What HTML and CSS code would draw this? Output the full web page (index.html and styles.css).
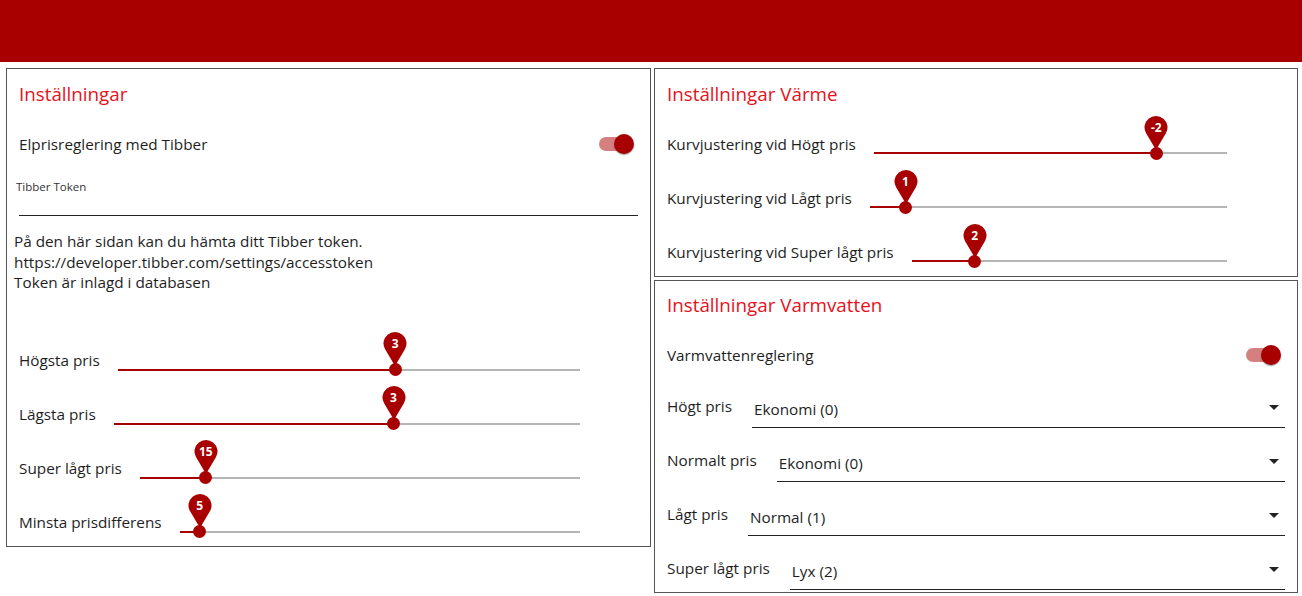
FILE: index.html
```html
<!DOCTYPE html>
<html lang="sv">
<head>
<meta charset="utf-8">
<title>Inställningar</title>
<link rel="stylesheet" href="styles.css">
</head>
<body>
<header class="topbar"></header>
<main class="layout">
  <section class="panel panel-main">
    <h2 class="panel-title">Inställningar</h2>
    <div class="switch-row">
      <span class="row-label">Elprisreglering med Tibber</span>
      <span class="switch"><span class="switch-track"></span><span class="switch-thumb"></span></span>
    </div>
    <div class="text-field">
      <label class="field-label">Tibber Token</label>
      <div class="field-input"></div>
    </div>
    <p class="info">På den här sidan kan du hämta ditt Tibber token.<br>https://developer.tibber.com/settings/accesstoken<br>Token är inlagd i databasen</p>
    <div class="slider-list slider-list-main">
      <div class="slider-row">
        <span class="row-label">Högsta pris</span>
        <div class="slider">
          <div class="slider-rail"></div>
          <div class="slider-track" style="width:60%"></div>
          <div class="slider-thumb" style="left:60%">
            <span class="pin"><svg class="pin-shape" viewBox="0 0 24 34"><path d="M12 34 L2.11 17.37 A11.5 11.5 0 1 1 21.89 17.37 Z"/></svg><span class="pin-text">3</span></span>
          </div>
        </div>
      </div>
      <div class="slider-row">
        <span class="row-label">Lägsta pris</span>
        <div class="slider">
          <div class="slider-rail"></div>
          <div class="slider-track" style="width:60%"></div>
          <div class="slider-thumb" style="left:60%">
            <span class="pin"><svg class="pin-shape" viewBox="0 0 24 34"><path d="M12 34 L2.11 17.37 A11.5 11.5 0 1 1 21.89 17.37 Z"/></svg><span class="pin-text">3</span></span>
          </div>
        </div>
      </div>
      <div class="slider-row">
        <span class="row-label">Super lågt pris</span>
        <div class="slider">
          <div class="slider-rail"></div>
          <div class="slider-track" style="width:15%"></div>
          <div class="slider-thumb" style="left:15%">
            <span class="pin"><svg class="pin-shape" viewBox="0 0 24 34"><path d="M12 34 L2.11 17.37 A11.5 11.5 0 1 1 21.89 17.37 Z"/></svg><span class="pin-text">15</span></span>
          </div>
        </div>
      </div>
      <div class="slider-row">
        <span class="row-label">Minsta prisdifferens</span>
        <div class="slider">
          <div class="slider-rail"></div>
          <div class="slider-track" style="width:5%"></div>
          <div class="slider-thumb" style="left:5%">
            <span class="pin"><svg class="pin-shape" viewBox="0 0 24 34"><path d="M12 34 L2.11 17.37 A11.5 11.5 0 1 1 21.89 17.37 Z"/></svg><span class="pin-text">5</span></span>
          </div>
        </div>
      </div>
    </div>
  </section>

  <div class="col-right">
    <section class="panel panel-heat">
      <h2 class="panel-title">Inställningar Värme</h2>
      <div class="slider-list slider-list-heat">
        <div class="slider-row">
          <span class="row-label">Kurvjustering vid Högt pris</span>
          <div class="slider">
            <div class="slider-rail"></div>
            <div class="slider-track" style="width:80%"></div>
            <div class="slider-thumb" style="left:80%">
              <span class="pin"><svg class="pin-shape" viewBox="0 0 24 34"><path d="M12 34 L2.11 17.37 A11.5 11.5 0 1 1 21.89 17.37 Z"/></svg><span class="pin-text">-2</span></span>
            </div>
          </div>
        </div>
        <div class="slider-row">
          <span class="row-label">Kurvjustering vid Lågt pris</span>
          <div class="slider">
            <div class="slider-rail"></div>
            <div class="slider-track" style="width:10%"></div>
            <div class="slider-thumb" style="left:10%">
              <span class="pin"><svg class="pin-shape" viewBox="0 0 24 34"><path d="M12 34 L2.11 17.37 A11.5 11.5 0 1 1 21.89 17.37 Z"/></svg><span class="pin-text">1</span></span>
            </div>
          </div>
        </div>
        <div class="slider-row">
          <span class="row-label">Kurvjustering vid Super lågt pris</span>
          <div class="slider">
            <div class="slider-rail"></div>
            <div class="slider-track" style="width:20%"></div>
            <div class="slider-thumb" style="left:20%">
              <span class="pin"><svg class="pin-shape" viewBox="0 0 24 34"><path d="M12 34 L2.11 17.37 A11.5 11.5 0 1 1 21.89 17.37 Z"/></svg><span class="pin-text">2</span></span>
            </div>
          </div>
        </div>
      </div>
    </section>

    <section class="panel panel-water">
      <h2 class="panel-title">Inställningar Varmvatten</h2>
      <div class="switch-row">
        <span class="row-label">Varmvattenreglering</span>
        <span class="switch"><span class="switch-track"></span><span class="switch-thumb"></span></span>
      </div>
      <div class="select-list">
        <div class="select-row">
          <span class="row-label">Högt pris</span>
          <div class="select">Ekonomi (0)<svg class="select-icon" viewBox="0 0 24 24"><path d="M7 10l5 5 5-5z"/></svg></div>
        </div>
        <div class="select-row">
          <span class="row-label">Normalt pris</span>
          <div class="select">Ekonomi (0)<svg class="select-icon" viewBox="0 0 24 24"><path d="M7 10l5 5 5-5z"/></svg></div>
        </div>
        <div class="select-row">
          <span class="row-label">Lågt pris</span>
          <div class="select">Normal (1)<svg class="select-icon" viewBox="0 0 24 24"><path d="M7 10l5 5 5-5z"/></svg></div>
        </div>
        <div class="select-row">
          <span class="row-label">Super lågt pris</span>
          <div class="select">Lyx (2)<svg class="select-icon" viewBox="0 0 24 24"><path d="M7 10l5 5 5-5z"/></svg></div>
        </div>
      </div>
    </section>
  </div>
</main>
</body>
</html>
```

FILE: styles.css
```css
* { box-sizing: border-box; }

body {
  margin: 0;
  font-family: "Open Sans", "Noto Sans", sans-serif;
  font-size: 15.3px;
  color: #1e1e1e;
  background: #fff;
}

.topbar {
  height: 62px;
  background: #a80000;
}

.layout {
  display: grid;
  grid-template-columns: 645px 644px;
  column-gap: 3px;
  padding: 6px 0 0 6px;
  align-items: start;
}

.col-right {
  display: flex;
  flex-direction: column;
  gap: 3px;
}

.panel {
  border: 1px solid #555;
  padding: 12px 12px 0;
}

.panel-heat { padding-bottom: 1px; }
.panel-water { padding-top: 11px; padding-bottom: 2px; }

.panel-title {
  margin: 0;
  font-size: 18.8px;
  font-weight: 500;
  line-height: 27px;
  color: #e8101a;
}

.row-label {
  white-space: nowrap;
  line-height: 20px;
}

/* switch */
.switch-row {
  display: flex;
  align-items: center;
  justify-content: space-between;
  height: 50px;
  margin-top: 11px;
}

.switch {
  position: relative;
  width: 35px;
  height: 20px;
  margin-right: 4px;
}

.switch-track {
  position: absolute;
  left: 0;
  top: 3px;
  width: 34px;
  height: 14px;
  border-radius: 7px;
  background: #d48080;
}

.switch-thumb {
  position: absolute;
  left: 15px;
  top: 0;
  width: 20px;
  height: 20px;
  border-radius: 50%;
  background: #a80000;
  box-shadow: 0 2px 1px -1px rgba(0,0,0,0.2), 0 1px 1px 0 rgba(0,0,0,0.14), 0 1px 3px 0 rgba(0,0,0,0.12);
}

/* text field */
.text-field { margin-top: 11px; }

.field-label {
  display: block;
  margin-left: -3px;
  font-size: 11.5px;
  line-height: 14px;
  color: #333;
}

.field-input {
  height: 22px;
  border-bottom: 1px solid #222;
}

.info {
  margin: 15px 0 0 -5px;
  line-height: 20.5px;
}

/* sliders */
.slider-list-main { margin-top: 37px; }
.slider-list-heat { margin-top: 5px; }

.slider-row {
  display: flex;
  align-items: flex-end;
  height: 54px;
  margin-right: 58px;
}

.slider-row .row-label { margin-bottom: 13.5px; }

.slider {
  position: relative;
  flex: 1;
  height: 28px;
  margin-left: 18px;
}

.slider-rail,
.slider-track {
  position: absolute;
  left: 0;
  top: 13px;
  height: 2px;
}

.slider-rail { right: 0; background: #b5b5b5; }
.slider-track { background: #a80000; }

.slider-thumb {
  position: absolute;
  top: 14px;
  width: 13px;
  height: 13px;
  margin: -6.5px 0 0 -6.5px;
  border-radius: 50%;
  background: #a80000;
}

.pin {
  position: absolute;
  left: 50%;
  bottom: 10px;
  width: 24px;
  height: 34px;
  margin-left: -12px;
}

.pin-shape {
  display: block;
  width: 24px;
  height: 34px;
  fill: #a80000;
}

.pin-text {
  position: absolute;
  left: 0;
  top: 0;
  width: 24px;
  height: 23px;
  line-height: 23px;
  text-align: center;
  font-size: 12px;
  font-weight: 700;
  color: #fff;
}

/* selects */
.select-list {
  display: flex;
  flex-direction: column;
  gap: 6px;
}

.select-row {
  display: flex;
  align-items: flex-start;
}

.select-row .row-label { margin-top: 16px; }

.select {
  position: relative;
  flex: 1;
  margin: 15px 0 0 20px;
  padding: 4px 0 8px 2px;
  line-height: 20px;
  border-bottom: 1px solid #222;
}

.select-icon {
  position: absolute;
  right: -1px;
  top: 0;
  width: 24px;
  height: 24px;
  fill: #222;
}
```
